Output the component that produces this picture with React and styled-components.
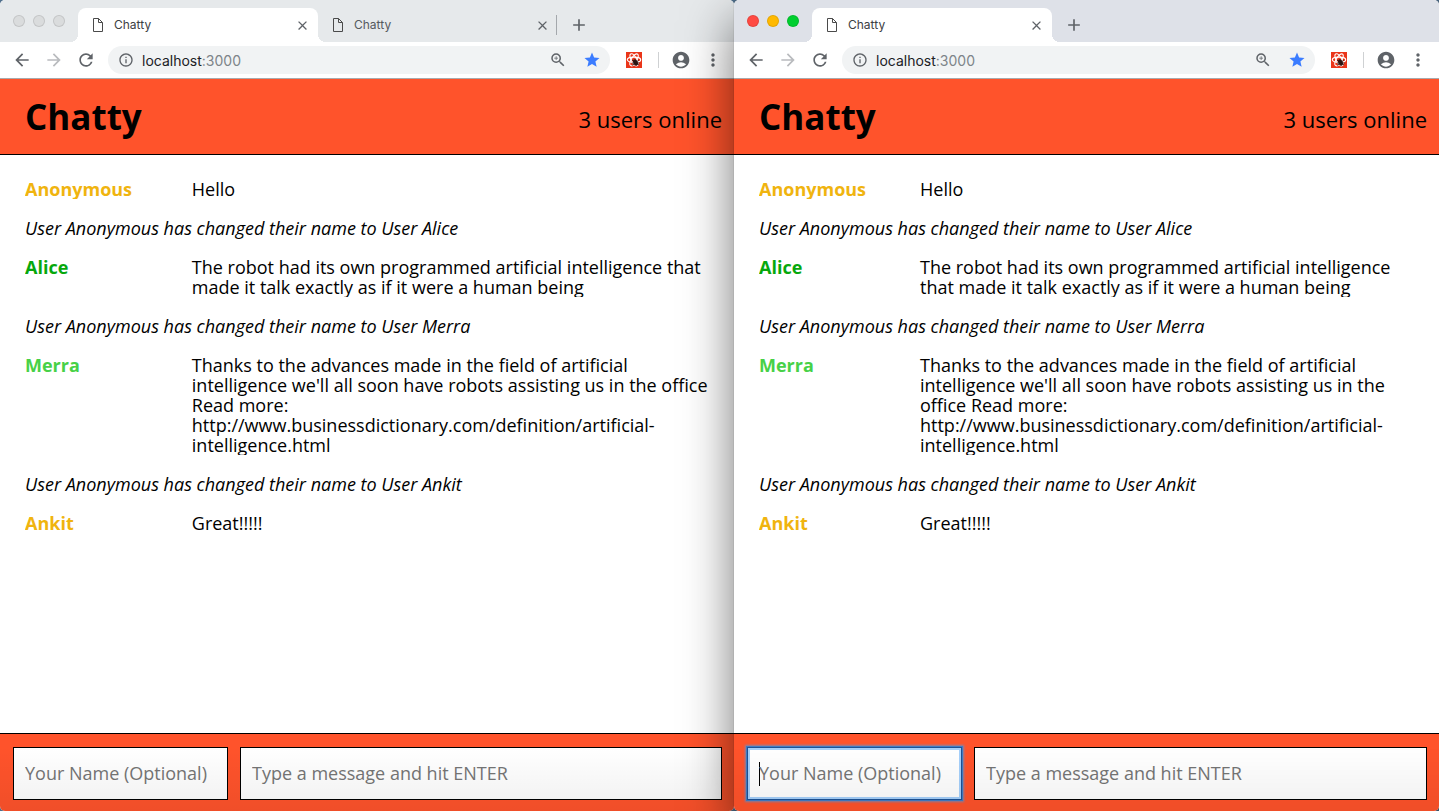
import React from "react";
import styled, { createGlobalStyle, css } from "styled-components";
import {
  MdArrowBack, MdArrowForward, MdRefresh, MdInfoOutline, MdZoomIn, MdStar,
  MdAccountCircle, MdMoreVert, MdClose, MdAdd,
} from "react-icons/md";

const GlobalStyle = createGlobalStyle`
  *, *::before, *::after { box-sizing: border-box; }
  body { margin: 0; background: #4f6f8c; }
  button { border: 0; padding: 0; background: none; font: inherit; color: inherit; }
`;

const Desktop = styled.div`
  display: grid;
  grid-template-columns: 734fr 705fr;
  min-height: 100vh;
`;

const Window = styled.section`
  position: relative;
  display: flex;
  flex-direction: column;
  min-width: 0;
  border-radius: 5px;
  background: #fff;
  z-index: ${(p) => (p.$active ? 1 : 0)};
  ${(p) => p.$active && css`
    box-shadow: 0 0 1px rgba(0, 0, 0, 0.5), 0 20px 50px rgba(0, 0, 0, 0.55);
  `}
  &::after {
    content: "";
    position: absolute;
    inset: auto 0 0 0;
    height: 64px;
    border-radius: 0 0 5px 5px;
    background: linear-gradient(rgba(0, 0, 0, 0), rgba(0, 0, 0, 0.06));
    pointer-events: none;
  }
`;

const TabStrip = styled.div`
  display: flex;
  align-items: flex-end;
  height: 42px;
  padding-left: 13px;
  border-radius: 5px 5px 0 0;
  background: ${(p) => (p.$active ? "#dee1e8" : "#e6e9eb")};
  font-family: Inter, sans-serif;
`;

const Lights = styled.div`
  display: flex;
  gap: 8px;
  width: 65px;
  padding-bottom: 15px;
`;

const Light = styled.button`
  width: 12px;
  height: 12px;
  border-radius: 50%;
  background: ${(p) => p.$color};
  border: 1px solid rgba(0, 0, 0, 0.1);
`;

const Tab = styled.div`
  position: relative;
  display: flex;
  align-items: center;
  width: 240px;
  height: 34px;
  padding: 0 10px 0 14px;
  border-radius: 8px 8px 0 0;
  font-size: 12px;
  color: ${(p) => (p.$selected ? "#3c4043" : "#55595e")};
  ${(p) => p.$selected && css`
    background: #fff;
    &::before, &::after {
      content: "";
      position: absolute;
      bottom: 0;
      width: 8px;
      height: 8px;
    }
    &::before { right: 100%; background: radial-gradient(circle at 0 0, transparent 8px, #fff 8px); }
    &::after { left: 100%; background: radial-gradient(circle at 100% 0, transparent 8px, #fff 8px); }
  `}
`;

const TabTitle = styled.span`
  flex: 1;
  padding: 0 0 2px 10px;
`;

const IconButton = styled.button`
  display: grid;
  place-items: center;
  flex: none;
  width: ${(p) => p.$w || 20}px;
  height: 20px;
  color: ${(p) => p.$color || "#5f6368"};
  font-size: ${(p) => p.$size || 18}px;
`;

const NewTab = styled.div`
  display: flex;
  align-items: center;
  height: 34px;
  padding-left: 12px;
`;

const TabDivider = styled.span`
  align-self: center;
  width: 1px;
  height: 20px;
  margin: 7px 0 0 -2px;
  background: #a4a8ac;
`;

const Toolbar = styled.div`
  display: flex;
  align-items: center;
  height: 37px;
  padding: 0 11px 0 12px;
  border-bottom: 1px solid #a9a9ac;
  background: #fff;
`;

const NavButtons = styled.div`
  display: flex;
  gap: 12px;
  padding-right: 12px;
`;

const AddressBar = styled.div`
  display: flex;
  align-items: center;
  flex: 1;
  min-width: 0;
  height: 28px;
  padding: 0 8px;
  border-radius: 14px;
  background: #f1f3f4;
`;

const Url = styled.span`
  flex: 1;
  padding-left: 6px;
  font: 14px Inter, sans-serif;
  color: #7d8489;
  b { font-weight: 400; color: #202124; }
`;

const BarActions = styled.div`
  display: flex;
  gap: 14px;
`;

const Extensions = styled.div`
  display: flex;
  align-items: center;
  padding-left: 14px;
`;

const BarDivider = styled.span`
  width: 1px;
  height: 16px;
  margin: 0 12px 0 14px;
  background: #cfd1d3;
`;

const MenuSlot = styled.div`
  padding-left: 12px;
`;

const AppHeader = styled.header`
  display: flex;
  align-items: center;
  justify-content: space-between;
  height: 76px;
  padding: 0 12px 0 25px;
  border-bottom: 1px solid #000;
  background: #ff532b;
  font-family: "Open Sans", sans-serif;
  color: #000;
`;

const Brand = styled.h1`
  margin: 0;
  font-size: 35px;
  font-weight: 700;
  line-height: 48px;
`;

const Online = styled.span`
  padding-top: 4px;
  font-size: 22px;
  line-height: 32px;
`;

const Messages = styled.main`
  display: flex;
  flex: 1;
  flex-direction: column;
  gap: 19px;
  padding: 24px 25px;
  font-family: "Open Sans", sans-serif;
  font-size: 18px;
  line-height: 20px;
  color: #000;
`;

const Message = styled.article`
  display: flex;
  overflow: hidden;
`;

const Author = styled.span`
  flex: none;
  width: calc(20% + 30px);
  font-weight: 700;
  color: ${(p) => p.$color};
`;

const Content = styled.span`
  flex: 1;
  min-width: 0;
`;

const Notice = styled.div`
  font-style: italic;
`;

const ChatBar = styled.form`
  display: flex;
  gap: 12px;
  padding: 13px 12px 11px 13px;
  border-top: 1px solid #000;
  border-radius: 0 0 5px 5px;
  background: #ff532b;
`;

const Field = styled.input`
  flex: ${(p) => (p.$width ? "none" : "1")};
  width: ${(p) => (p.$width ? p.$width + "px" : "auto")};
  min-width: 0;
  height: 53px;
  padding: 0 11px 2px;
  border: 1px solid #000;
  border-radius: 0;
  background: #fff;
  font: 18px "Open Sans", sans-serif;
  color: #000;
  &::placeholder { color: #757575; opacity: 1; }
  &:focus {
    outline: none;
    border-color: #1e5296;
    box-shadow: 0 0 0 1px #3f7cc4, 0 0 2px 2px #7f86ad, inset 0 0 0 2px #a5d0fb;
  }
  &:focus:placeholder-shown {
    caret-color: transparent;
    background: linear-gradient(#000, #000) 11px center / 1px 24px no-repeat #fff;
  }
`;

const PageIcon = () => (
  <svg width="12" height="15" viewBox="0 0 12 15" fill="none" stroke="#4a4a4a" aria-hidden="true">
    <path d="M1.500 .500h5l4 4v9h-9z" />
    <path d="M6.500 .500v4h4" />
  </svg>
);

const ReactIcon = () => (
  <svg width="16" height="16" viewBox="0 0 16 16" aria-hidden="true">
    <rect width="16" height="16" fill="#ea3519" />
    <g fill="none" stroke="#fff" strokeWidth="1.1">
      <ellipse cx="8" cy="7.800" rx="6.700" ry="2.700" />
      <ellipse cx="8" cy="7.800" rx="6.700" ry="2.700" transform="rotate(60 8 7.800)" />
      <ellipse cx="8" cy="7.800" rx="6.700" ry="2.700" transform="rotate(120 8 7.800)" />
    </g>
    <ellipse cx="9.500" cy="10.500" rx="2.200" ry="3.200" fill="#2b1512" transform="rotate(-25 9.500 10.500)" />
    <path d="M6 8l7 5M12.800 8l-6.500 5.500M6 11h7.500" stroke="#2b1512" strokeWidth=".8" />
  </svg>
);

const GOLD = "#f0b40f";

const ENTRIES = [
  { author: "Anonymous", color: GOLD, text: "Hello" },
  { notice: "User Anonymous has changed their name to User Alice" },
  { author: "Alice", color: "#06a80c", text: "The robot had its own programmed artificial intelligence that made it talk exactly as if it were a human being" },
  { notice: "User Anonymous has changed their name to User Merra" },
  { author: "Merra", color: "#47d147", text: "Thanks to the advances made in the field of artificial intelligence we'll all soon have robots assisting us in the office Read more: http://www.businessdictionary.com/definition/artificial-intelligence.html" },
  { notice: "User Anonymous has changed their name to User Ankit" },
  { author: "Ankit", color: GOLD, text: "Great!!!!!" },
];

const LIGHT_NAMES = ["Close window", "Minimise window", "Zoom window"];

function BrowserTab({ selected }) {
  return (
    <Tab $selected={selected}>
      <PageIcon />
      <TabTitle>Chatty</TabTitle>
      <IconButton type="button" aria-label="Close tab" $w={13} $size={15}><MdClose /></IconButton>
    </Tab>
  );
}

function BrowserWindow({ active, tabs }) {
  const lights = active ? ["#ff4a43", "#ffb900", "#00cf2f"] : ["#dadcdd", "#dadcdd", "#dadcdd"];
  return (
    <Window $active={active}>
      <TabStrip $active={active}>
        <Lights>
          {lights.map((color, i) => (
            <Light key={LIGHT_NAMES[i]} type="button" aria-label={LIGHT_NAMES[i]} $color={color} />
          ))}
        </Lights>
        {Array.from({ length: tabs }, (_, i) => <BrowserTab key={i} selected={i === 0} />)}
        {tabs > 1 && <TabDivider />}
        <NewTab>
          <IconButton type="button" aria-label="New tab" $size={20}><MdAdd /></IconButton>
        </NewTab>
      </TabStrip>
      <Toolbar>
        <NavButtons>
          <IconButton type="button" aria-label="Back" $size={20}><MdArrowBack /></IconButton>
          <IconButton type="button" aria-label="Forward" $size={20} $color="#b9bbbe"><MdArrowForward /></IconButton>
          <IconButton type="button" aria-label="Reload" $size={20}><MdRefresh /></IconButton>
        </NavButtons>
        <AddressBar>
          <IconButton type="button" aria-label="Site information" $size={16}><MdInfoOutline /></IconButton>
          <Url><b>localhost</b>:3000</Url>
          <BarActions>
            <IconButton type="button" aria-label="Zoom"><MdZoomIn /></IconButton>
            <IconButton type="button" aria-label="Bookmark" $color="#3b7cff"><MdStar /></IconButton>
          </BarActions>
        </AddressBar>
        <Extensions>
          <IconButton type="button" aria-label="React tools"><ReactIcon /></IconButton>
          <BarDivider />
          <IconButton type="button" aria-label="Profile" $size={20}><MdAccountCircle /></IconButton>
          <MenuSlot>
            <IconButton type="button" aria-label="Menu" $size={20}><MdMoreVert /></IconButton>
          </MenuSlot>
        </Extensions>
      </Toolbar>
      <AppHeader>
        <Brand>Chatty</Brand>
        <Online>3 users online</Online>
      </AppHeader>
      <Messages>
        {ENTRIES.map((e, i) =>
          e.notice ? (
            <Notice key={i}>{e.notice}</Notice>
          ) : (
            <Message key={i}>
              <Author $color={e.color}>{e.author}</Author>
              <Content>{e.text}</Content>
            </Message>
          )
        )}
      </Messages>
      <ChatBar onSubmit={(ev) => ev.preventDefault()}>
        <Field $width={215} aria-label="Your name" placeholder="Your Name (Optional)" autoFocus={active} />
        <Field aria-label="Message" placeholder="Type a message and hit ENTER" />
      </ChatBar>
    </Window>
  );
}

export default function App() {
  return (
    <>
      <GlobalStyle />
      <Desktop>
        <BrowserWindow tabs={2} />
        <BrowserWindow tabs={1} active />
      </Desktop>
    </>
  );
}
